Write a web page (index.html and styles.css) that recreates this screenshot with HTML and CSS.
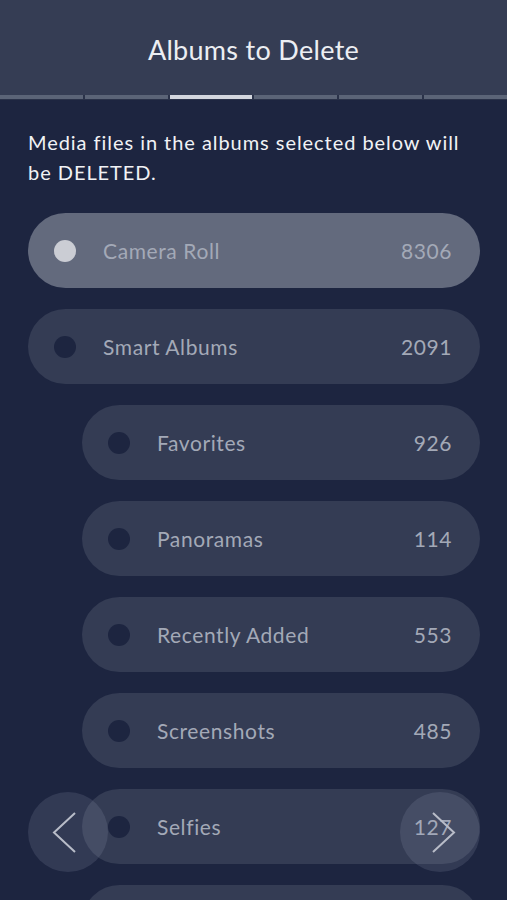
FILE: index.html
```html
<!DOCTYPE html>
<html>
<head>
<meta charset="utf-8">
<link rel="stylesheet" href="styles.css">
</head>
<body>
<div class="screen">
  <header class="header">
    <h1 class="title">Albums to Delete</h1>
  </header>
  <div class="tabs">
    <span class="seg"></span><span class="seg"></span><span class="seg active"></span><span class="seg"></span><span class="seg"></span><span class="seg"></span>
  </div>
  <main class="content">
    <p class="intro">Media files in the albums selected below will be DELETED.</p>
    <ul class="list">
      <li class="row selected"><span class="dot"></span><span class="name">Camera Roll</span><span class="count">8306</span></li>
      <li class="row"><span class="dot"></span><span class="name">Smart Albums</span><span class="count">2091</span></li>
      <li class="row sub"><span class="dot"></span><span class="name">Favorites</span><span class="count">926</span></li>
      <li class="row sub"><span class="dot"></span><span class="name">Panoramas</span><span class="count">114</span></li>
      <li class="row sub"><span class="dot"></span><span class="name">Recently Added</span><span class="count">553</span></li>
      <li class="row sub"><span class="dot"></span><span class="name">Screenshots</span><span class="count">485</span></li>
      <li class="row sub"><span class="dot"></span><span class="name">Selfies</span><span class="count">127</span></li>
      <li class="row sub"><span class="dot"></span></li>
    </ul>
  </main>
  <button class="nav prev" aria-label="Previous">
    <svg width="80" height="80" viewBox="0 0 80 80"><polyline points="47,21 26,40.5 47,60" fill="none" stroke="#b8bcc8" stroke-width="2"/></svg>
  </button>
  <button class="nav next" aria-label="Next">
    <svg width="80" height="80" viewBox="0 0 80 80"><polyline points="33,21 54,40.5 33,60" fill="none" stroke="#b8bcc8" stroke-width="2"/></svg>
  </button>
</div>
</body>
</html>
```
FILE: styles.css
```css
* { box-sizing: border-box; }
html, body { margin: 0; padding: 0; }
body {
  background: #1d2540;
  font-family: Lato, "Noto Sans", sans-serif;
  width: 507px;
  height: 900px;
  overflow: hidden;
}
.screen {
  position: relative;
  width: 507px;
  height: 900px;
  overflow: hidden;
  background: #1d2540;
}
.header {
  height: 95px;
  background: #353d54;
  display: flex;
  align-items: center;
  justify-content: center;
}
.title {
  margin: 0;
  padding-top: 4px;
  font-weight: 400;
  font-size: 27px;
  color: #eceef2;
  letter-spacing: 0.3px;
}
.tabs {
  display: flex;
  gap: 2px;
  height: 5px;
  background: #2a3249;
}
.seg {
  flex: 1;
  background: #5b6477;
  height: 4px;
}
.seg.active { background: #d3d6de; }
.content {
  padding: 0 27px 0 28px;
}
.intro {
  margin: 27px 0 0;
  max-width: 445px;
  font-size: 20px;
  line-height: 30px;
  letter-spacing: 0.95px;
  color: #f1f2f5;
}
.list {
  list-style: none;
  margin: 26px 0 0;
  padding: 0;
  display: flex;
  flex-direction: column;
  gap: 21px;
}
.row {
  height: 75px;
  flex: none;
  border-radius: 38px;
  background: #343c54;
  display: flex;
  align-items: center;
  padding: 0 28px 0 26px;
  color: #a3a9b7;
  font-size: 21px;
  letter-spacing: 0.6px;
}
.row.sub { margin-left: 54px; }
.row.selected { background: #636a7d; }
.dot {
  width: 22px;
  height: 22px;
  border-radius: 50%;
  background: #1d2540;
  flex: none;
}
.row.selected .dot { background: #cbcdd4; }
.name {
  margin-left: 27px;
  flex: 1;
}
.count {
  text-align: right;
}
.nav {
  position: absolute;
  top: 792px;
  width: 80px;
  height: 80px;
  border-radius: 50%;
  border: none;
  padding: 0;
  background: rgba(160, 170, 195, 0.16);
  display: flex;
  align-items: center;
  justify-content: center;
}
.nav svg { display: block; }
.prev { left: 28px; }
.next { left: 400px; }
```
